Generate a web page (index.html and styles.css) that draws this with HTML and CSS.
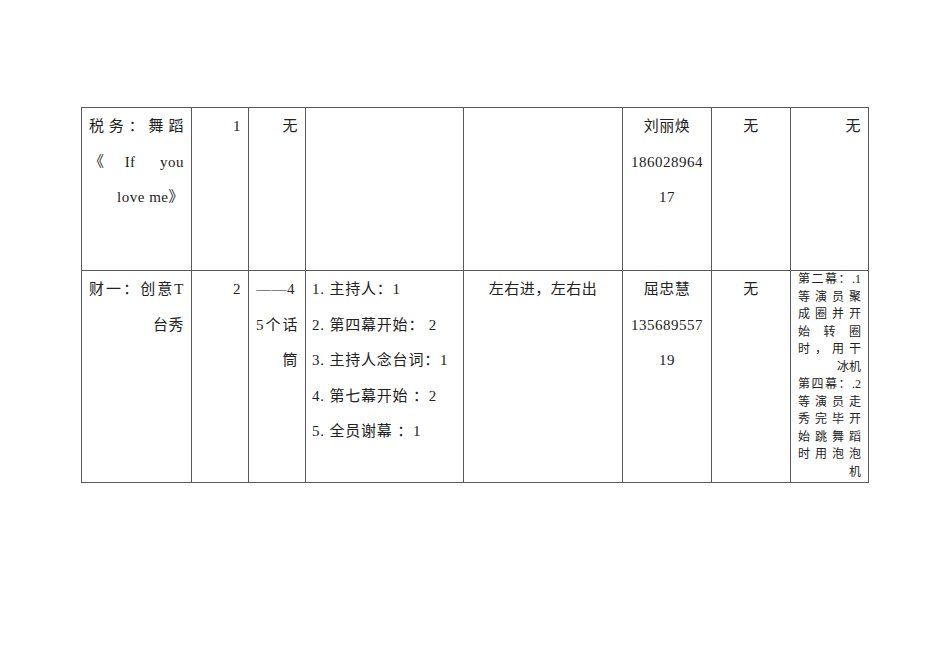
FILE: index.html
```html
<!DOCTYPE html>
<html lang="zh-CN">
<head>
<meta charset="utf-8">
<title>节目安排表</title>
<link rel="stylesheet" href="styles.css">
</head>
<body>
<div class="page">
  <table class="sheet">
    <colgroup>
      <col class="c1"><col class="c2"><col class="c3"><col class="c4">
      <col class="c5"><col class="c6"><col class="c7"><col class="c8">
    </colgroup>
    <tr class="row1">
      <td class="dist">
        <span class="ln full">税务：舞蹈</span>
        <span class="ln full">《 If&nbsp; you</span>
        <span class="ln">love me》</span>
      </td>
      <td class="right">1</td>
      <td class="right">无</td>
      <td></td>
      <td></td>
      <td class="center">
        <span class="ln">刘丽焕</span>
        <span class="ln">186028964</span>
        <span class="ln">17</span>
      </td>
      <td class="center">无</td>
      <td class="right">无</td>
    </tr>
    <tr class="row2">
      <td class="dist">
        <span class="ln full">财一：创意T</span>
        <span class="ln">台秀</span>
      </td>
      <td class="right">2</td>
      <td class="dist">
        <span class="ln full">——4</span>
        <span class="ln full">5个话</span>
        <span class="ln">筒</span>
      </td>
      <td class="list">
        <span class="ln">1. 主持人：1</span>
        <span class="ln">2. 第四幕开始： 2</span>
        <span class="ln">3. 主持人念台词：1</span>
        <span class="ln">4. 第七幕开始 ：2</span>
        <span class="ln">5. 全员谢幕 ：1</span>
      </td>
      <td class="center">左右进，左右出</td>
      <td class="center">
        <span class="ln">屈忠慧</span>
        <span class="ln">135689557</span>
        <span class="ln">19</span>
      </td>
      <td class="center">无</td>
      <td class="dist small">
        <span class="ln full">第二幕：.1</span>
        <span class="ln full">等演员聚</span>
        <span class="ln full">成圈并开</span>
        <span class="ln full">始转圈</span>
        <span class="ln full">时，用干</span>
        <span class="ln">冰机</span>
        <span class="ln full">第四幕：.2</span>
        <span class="ln full">等演员走</span>
        <span class="ln full">秀完毕开</span>
        <span class="ln full">始跳舞蹈</span>
        <span class="ln full">时用泡泡</span>
        <span class="ln">机</span>
      </td>
    </tr>
  </table>
</div>
</body>
</html>
```

FILE: styles.css
```css
html, body {
  margin: 0;
  padding: 0;
  background: #ffffff;
}

.page {
  width: 950px;
  height: 672px;
  box-sizing: border-box;
  padding: 107px 0 0 81px;
  font-family: "Liberation Serif", "Noto Sans CJK SC", serif;
  color: #222222;
}

.sheet {
  border-collapse: collapse;
  table-layout: fixed;
  width: 787px;
}

.c1 { width: 110px; }
.c2 { width: 57px; }
.c3 { width: 57px; }
.c4 { width: 158px; }
.c5 { width: 159px; }
.c6 { width: 89px; }
.c7 { width: 79px; }
.c8 { width: 78px; }

.sheet td {
  border: 1px solid #5a5a5a;
  vertical-align: top;
  padding: 1px 7px 0 7px;
  font-size: 15px;
  line-height: 35.5px;
  letter-spacing: 0.5px;
  overflow: hidden;
}

.row1 { height: 163px; }
.row2 { height: 212px; }

.ln {
  display: block;
}

.right { text-align: right; }
.center { text-align: center; }
.sheet td.list { text-align: left; padding-left: 6px; letter-spacing: 0.8px; }

.dist {
  text-align: right;
}
.dist .full {
  text-align: justify;
  text-align-last: justify;
  text-justify: inter-character;
}

.sheet td.small {
  font-size: 12px;
  line-height: 17.5px;
  padding-top: 0;
  letter-spacing: 0;
}
```
